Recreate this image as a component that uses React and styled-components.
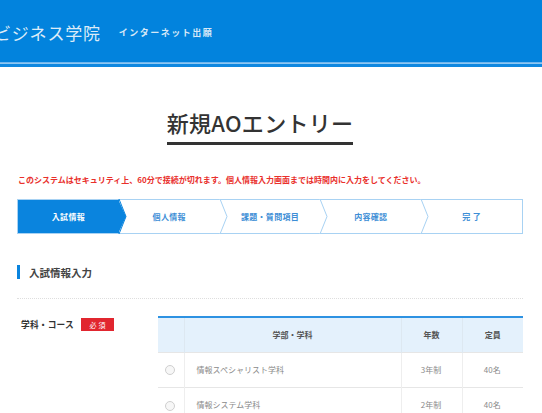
import React from "react";
import styled, { createGlobalStyle } from "styled-components";

const Global = createGlobalStyle`
  html, body { margin: 0; padding: 0; background: #fff; }
  body { font-family: "Noto Sans CJK JP", "Noto Sans", sans-serif; color: #333; overflow: hidden; }
  * { box-sizing: border-box; }
`;

const Page = styled.div`
  width: 542px;
  height: 413px;
  overflow: hidden;
`;

const Header = styled.header`
  display: flex;
  flex-direction: column;
`;

const HeaderBar = styled.div`
  height: 62px;
  background: #0283dd;
  display: flex;
  align-items: center;
  padding-top: 2px;
`;

const HeaderRule = styled.div`
  height: 5px;
  background: #8fc8f2;
  border-top: 1px solid #6fb6ee;
  border-bottom: 3px solid #0f88e0;
`;

const SiteName = styled.span`
  margin-left: -6px;
  font-size: 17px;
  letter-spacing: 0.8px;
  color: #dcebf8;
  font-weight: 400;
`;

const SiteSub = styled.span`
  margin-left: 18px;
  font-size: 9px;
  letter-spacing: 1.5px;
  color: #d6e8f7;
  font-weight: 700;
`;

const Main = styled.main`
  margin-left: 17px;
  width: 506px;
  display: flex;
  flex-direction: column;
`;

const TitleWrap = styled.div`
  display: flex;
  justify-content: center;
  margin-top: 44px;
  padding-right: 20px;
`;

const Title = styled.h1`
  margin: 0;
  font-size: 22px;
  line-height: 22px;
  font-weight: 500;
  color: #333;
  padding-bottom: 9px;
  border-bottom: 3px solid #333;
  letter-spacing: 0.3px;
`;

const Notice = styled.p`
  margin: 29px 0 0 1px;
  font-size: 8px;
  line-height: 12px;
  font-weight: 700;
  color: #e9302c;
  white-space: nowrap;
`;

const Steps = styled.ol`
  list-style: none;
  margin: 13px 0 0;
  padding: 0;
  display: flex;
  height: 35px;
  border: 1px solid #a8d2f3;
`;

const Step = styled.li`
  position: relative;
  flex: 1;
  display: flex;
  align-items: center;
  justify-content: center;
  font-size: 8px;
  font-weight: 700;
  letter-spacing: 0.3px;
  background: ${(p) => (p.$active ? "#0a84de" : "#fff")};
  color: ${(p) => (p.$active ? "#fff" : "#3d8ed6")};
`;

const Chevron = styled.svg`
  position: absolute;
  top: -1px;
  right: -8px;
  width: 8px;
  height: 35px;
  z-index: 2;
  overflow: visible;
`;

const SectionHead = styled.h2`
  margin: 31px 0 0;
  display: flex;
  align-items: center;
  gap: 9px;
  font-size: 10.5px;
  font-weight: 700;
  color: #444;
  height: 14px;
`;

const SectionMark = styled.span`
  width: 3px;
  height: 14px;
  background: #0a84de;
`;

const Divider = styled.hr`
  margin: 19px 0 0;
  border: 0;
  border-top: 1px dotted #dedede;
`;

const FormRow = styled.div`
  margin-top: 17px;
  display: flex;
  align-items: flex-start;
`;

const LabelCell = styled.div`
  width: 141px;
  padding-left: 4px;
  display: flex;
  align-items: center;
  gap: 7px;
  padding-top: 2px;
`;

const Label = styled.span`
  font-size: 8.7px;
  font-weight: 700;
  color: #333;
  letter-spacing: 0.2px;
`;

const Required = styled.span`
  width: 33px;
  height: 13px;
  background: #e1262f;
  color: #fff;
  font-size: 7px;
  letter-spacing: 2px;
  display: flex;
  align-items: center;
  justify-content: center;
  padding-left: 2px;
`;

const Table = styled.table`
  width: 365px;
  border-collapse: collapse;
  border-top: 2px solid #2d92e2;
  table-layout: fixed;
`;

const Th = styled.th`
  height: 35px;
  background: #e4f1fc;
  font-size: 8px;
  font-weight: 700;
  color: #555;
  text-align: center;
  border-left: 1px solid #dde8f1;
  &:first-child { border-left: 0; }
`;

const Td = styled.td`
  height: 35px;
  font-size: 8px;
  color: #8a8a8a;
  text-align: ${(p) => (p.$left ? "left" : "center")};
  padding-left: ${(p) => (p.$left ? "12px" : "0")};
  border-top: 1px solid #e6e6e6;
  border-left: 1px solid #eeeeee;
  &:first-child { border-left: 0; }
`;

const Radio = styled.span`
  display: inline-block;
  width: 10px;
  height: 10px;
  border-radius: 50%;
  border: 1px solid #cfcfcf;
  background: #f7f7f7;
  vertical-align: middle;
`;

const steps = ["入試情報", "個人情報", "課題・質問項目", "内容確認", "完 了"];
const rows = [
  ["情報スペシャリスト学科", "3年制", "40名"],
  ["情報システム学科", "2年制", "40名"],
];

export default function App() {
  return (
    <Page>
      <Global />
      <Header>
        <HeaderBar>
          <SiteName>ビジネス学院</SiteName>
          <SiteSub>インターネット出願</SiteSub>
        </HeaderBar>
        <HeaderRule />
      </Header>
      <Main>
        <TitleWrap>
          <Title>新規AOエントリー</Title>
        </TitleWrap>
        <Notice>
          このシステムはセキュリティ上、60分で接続が切れます。個人情報入力画面までは時間内に入力をしてください。
        </Notice>
        <Steps>
          {steps.map((s, i) => (
            <Step key={s} $active={i === 0}>
              {s}
              {i < steps.length - 1 && (
                <Chevron viewBox="0 0 8 35" preserveAspectRatio="none">
                  <polygon
                    points="-1,0 7,17.5 -1,35"
                    fill={i === 0 ? "#0a84de" : "#fff"}
                  />
                  <polyline
                    points="0,0 7,17.5 0,35"
                    fill="none"
                    stroke={i === 0 ? "#0a84de" : "#a8d2f3"}
                    strokeWidth="1"
                  />
                </Chevron>
              )}
            </Step>
          ))}
        </Steps>
        <SectionHead>
          <SectionMark />
          入試情報入力
        </SectionHead>
        <Divider />
        <FormRow>
          <LabelCell>
            <Label>学科・コース</Label>
            <Required>必須</Required>
          </LabelCell>
          <Table>
            <colgroup>
              <col style={{ width: 26 }} />
              <col style={{ width: 217 }} />
              <col style={{ width: 61 }} />
              <col style={{ width: 61 }} />
            </colgroup>
            <thead>
              <tr>
                <Th />
                <Th>学部・学科</Th>
                <Th>年数</Th>
                <Th>定員</Th>
              </tr>
            </thead>
            <tbody>
              {rows.map((r) => (
                <tr key={r[0]}>
                  <Td>
                    <Radio />
                  </Td>
                  <Td $left>{r[0]}</Td>
                  <Td>{r[1]}</Td>
                  <Td>{r[2]}</Td>
                </tr>
              ))}
            </tbody>
          </Table>
        </FormRow>
      </Main>
    </Page>
  );
}
